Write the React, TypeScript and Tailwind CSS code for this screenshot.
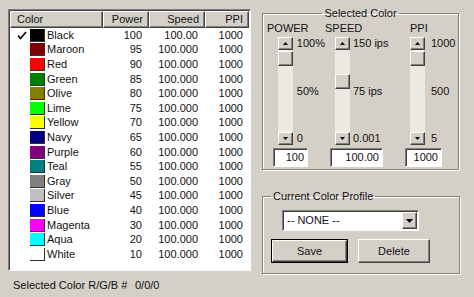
import React from 'react';

const rows = [
  { name: 'Black', hex: '#000000', power: 100, speed: '100.00' },
  { name: 'Maroon', hex: '#800000', power: 95, speed: '100.000' },
  { name: 'Red', hex: '#ff0000', power: 90, speed: '100.000' },
  { name: 'Green', hex: '#008000', power: 85, speed: '100.000' },
  { name: 'Olive', hex: '#808000', power: 80, speed: '100.000' },
  { name: 'Lime', hex: '#00ff00', power: 75, speed: '100.000' },
  { name: 'Yellow', hex: '#ffff00', power: 70, speed: '100.000' },
  { name: 'Navy', hex: '#000080', power: 65, speed: '100.000' },
  { name: 'Purple', hex: '#800080', power: 60, speed: '100.000' },
  { name: 'Teal', hex: '#008080', power: 55, speed: '100.000' },
  { name: 'Gray', hex: '#808080', power: 50, speed: '100.000' },
  { name: 'Silver', hex: '#c0c0c0', power: 45, speed: '100.000' },
  { name: 'Blue', hex: '#0000ff', power: 40, speed: '100.000' },
  { name: 'Magenta', hex: '#ff00ff', power: 30, speed: '100.000' },
  { name: 'Aqua', hex: '#00ffff', power: 20, speed: '100.000' },
  { name: 'White', hex: '#ffffff', power: 10, speed: '100.000' },
];

const raised =
  'bg-[#d4d0c8] border border-t-white border-l-white border-r-[#404040] border-b-[#404040] shadow-[inset_-1px_-1px_0_#808080]';
const sunken =
  'bg-white border border-t-[#808080] border-l-[#808080] border-r-white border-b-white shadow-[inset_1px_1px_0_#404040]';

function Arrow({ up }: { up?: boolean }) {
  return (
    <svg width="5" height="3" viewBox="0 0 5 3">
      <path d={up ? 'M2.5 0L5 3H0z' : 'M0 0h5L2.5 3z'} fill="#000" />
    </svg>
  );
}

function Slider({ thumbTop, labels, labelGap }: { thumbTop: number; labels: string[]; labelGap: string }) {
  return (
    <div className="flex">
      <div className="flex flex-col w-[15px] h-[108px] bg-[#ece9e3]">
        <div className={`h-[13px] flex items-center justify-center ${raised}`}>
          <Arrow up />
        </div>
        <div className="flex-1 flex flex-col">
          <div style={{ height: thumbTop }} />
          <div className={`h-[15px] ${raised}`} />
        </div>
        <div className={`h-[13px] flex items-center justify-center ${raised}`}>
          <Arrow />
        </div>
      </div>
      <div className={`flex flex-col justify-between h-[108px] ${labelGap}`}>
        {labels.map((l) => (
          <div key={l} className="h-[13px] leading-[13px]">
            {l}
          </div>
        ))}
      </div>
    </div>
  );
}

export default function App() {
  return (
    <div
      className="w-[474px] h-[297px] bg-[#d4d0c8] flex text-[11px] text-[#111] overflow-hidden"
      style={{ fontFamily: '"Liberation Sans", Arial, sans-serif' }}
    >
      {/* Left: list of colors */}
      <div className="flex flex-col pl-[8px] pt-[9px]">
        <div className={`w-[243px] h-[262px] ${sunken} flex flex-col`}>
          <div className="flex h-[17px] ml-[1px] mt-[1px]">
            <div className={`w-[93px] pl-[6px] leading-[15px] ${raised}`}>Color</div>
            <div className={`w-[46px] pr-[5px] text-right leading-[15px] ${raised}`}>Power</div>
            <div className={`w-[56px] pr-[5px] text-right leading-[15px] ${raised}`}>Speed</div>
            <div className={`w-[44px] pr-[5px] text-right leading-[15px] ${raised}`}>PPI</div>
          </div>
          <div className="flex flex-col">
            {rows.map((r, i) => (
              <div key={r.name} className="flex items-center h-[14.6px]">
                <div className="w-[21px] flex justify-center pl-[4px]">
                  {i === 0 && (
                    <svg width="10" height="9" viewBox="0 0 10 9">
                      <path d="M1 4.5L3.5 7.5L9 1" stroke="#000" strokeWidth="1.6" fill="none" />
                    </svg>
                  )}
                </div>
                <div
                  className="w-[15px] h-[13px] border-r border-b border-[#303030]"
                  style={{ backgroundColor: r.hex }}
                />
                <div className="w-[55px] pl-[2px] leading-[13px]">{r.name}</div>
                <div className="w-[42px] text-right leading-[13px]">{r.power}</div>
                <div className="w-[56px] text-right leading-[13px]">{r.speed}</div>
                <div className="w-[45px] text-right leading-[13px]">1000</div>
              </div>
            ))}
          </div>
        </div>
        <div className="flex mt-[6px] pl-[5px]">
          <span className="w-[122px]">Selected Color R/G/B #</span>
          <span>0/0/0</span>
        </div>
      </div>

      {/* Right: settings */}
      <div className="flex flex-col ml-[11px] pt-[7px]">
        <fieldset className="w-[197px] h-[163px] border border-[#808080] shadow-[inset_1px_1px_0_#fff,1px_1px_0_#fff] px-0">
          <legend className="mx-auto px-[2px] leading-[12px]">Selected Color</legend>
          <div className="flex pl-[4px] mt-[3px]">
            <div className="flex flex-col w-[58px]">
              <div className="h-[15px] leading-[13px]">POWER</div>
              <div className="ml-[11px]">
                <Slider thumbTop={1} labels={['100%', '50%', '0']} labelGap="ml-[4px]" />
              </div>
              <div className={`ml-[6px] mt-[3px] w-[35px] h-[19px] text-right pr-[3px] leading-[16px] ${sunken}`}>
                100
              </div>
            </div>
            <div className="flex flex-col w-[80px]">
              <div className="h-[15px] leading-[13px]">SPEED</div>
              <div className="ml-[10px]">
                <Slider thumbTop={24} labels={['150 ips', '75 ips', '0.001']} labelGap="ml-[3px]" />
              </div>
              <div className={`ml-[5px] mt-[3px] w-[53px] h-[19px] text-right pr-[3px] leading-[16px] ${sunken}`}>
                100.00
              </div>
            </div>
            <div className="flex flex-col">
              <div className="h-[15px] leading-[13px] pl-[5px]">PPI</div>
              <div className="ml-[5px]">
                <Slider thumbTop={1} labels={['1000', '500', '5']} labelGap="ml-[6px]" />
              </div>
              <div className={`mt-[3px] w-[37px] h-[19px] text-right pr-[3px] leading-[16px] ${sunken}`}>
                1000
              </div>
            </div>
          </div>
        </fieldset>

        <fieldset className="mt-[20px] w-[198px] h-[84px] border border-[#808080] shadow-[inset_1px_1px_0_#fff,1px_1px_0_#fff] px-0">
          <legend className="ml-[8px] px-[2px] leading-[12px]">Current Color Profile</legend>
          <div className="flex flex-col pt-[8px]">
            <div className={`ml-[19px] w-[137px] h-[21px] flex items-center justify-between ${sunken}`}>
              <span className="pl-[4px]">-- NONE --</span>
              <div className={`w-[15px] h-[17px] mr-[1px] flex items-center justify-center ${raised}`}>
                <svg width="7" height="4" viewBox="0 0 7 4">
                  <path d="M0 0h7L3.5 4z" fill="#000" />
                </svg>
              </div>
            </div>
            <div className="flex mt-[8px] ml-[8px] gap-[10px]">
              <div className="w-[77px] h-[24px] border border-black">
                <div className={`h-full flex items-center justify-center ${raised}`}>Save</div>
              </div>
              <div className={`w-[72px] h-[24px] flex items-center justify-center ${raised}`}>Delete</div>
            </div>
          </div>
        </fieldset>
      </div>
    </div>
  );
}
